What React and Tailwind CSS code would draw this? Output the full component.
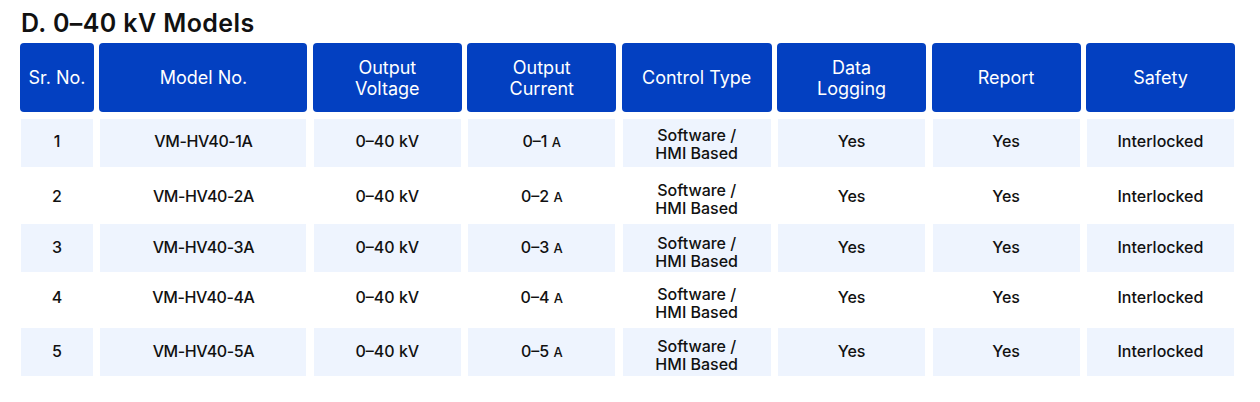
const columns = [
  { key: 'sr', label: ['Sr. No.'] },
  { key: 'model', label: ['Model No.'] },
  { key: 'voltage', label: ['Output', 'Voltage'] },
  { key: 'current', label: ['Output', 'Current'] },
  { key: 'control', label: ['Control Type'] },
  { key: 'logging', label: ['Data', 'Logging'] },
  { key: 'report', label: ['Report'] },
  { key: 'safety', label: ['Safety'] },
]

// small per-row nudges so the text sits where the original's font put it
const lineShift = ['-translate-y-[2px]', 'translate-y-[0.5px]', '-translate-y-[1.5px]', '-translate-y-[3px]', '-translate-y-[1.5px]']
const blockShift = ['translate-y-[0.5px]', 'translate-y-[4px]', 'translate-y-[3.5px]', 'translate-y-[3px]', 'translate-y-[3px]']

const rows = [1, 2, 3, 4, 5].map(n => ({
  sr: String(n),
  model: `VM-HV40-${n}A`,
  voltage: '0–40 kV',
  current: n,
  control: ['Software /', 'HMI Based'],
  logging: 'Yes',
  report: 'Yes',
  safety: 'Interlocked',
}))

const gridCols = 'grid grid-cols-[74px_208px_149px_149px_150px_149px_149px_149px] gap-x-[5.43px]'

function Cell({ col, value, row }) {
  let content = <span className={lineShift[row]}>{value}</span>
  if (col === 'model') {
    content = <span className={`tracking-[-0.4px] ${lineShift[row]}`}>{value}</span>
  }
  if (col === 'current') {
    content = (
      <span className={lineShift[row]}>
        0–{value}{' '}<span className="text-[13px]">A</span>
      </span>
    )
  }
  if (col === 'control') {
    content = (
      <span className={`leading-[18px] ${blockShift[row]}`}>
        {value[0]}
        <br />
        {value[1]}
      </span>
    )
  }
  return (
    <div
      className={`mx-px h-[48px] flex items-center justify-center text-center text-[16px] font-[450] text-[#111] ${
        row % 2 === 0 ? 'bg-[#eef4fe]' : ''
      }`}
    >
      {content}
    </div>
  )
}

export default function App() {
  return (
    <div
      className="w-[1260px] h-[402px] bg-white pl-[20px] pt-[7px]"
      style={{ fontFamily: 'Inter, "Noto Sans", sans-serif' }}
    >
      <h2 className="h-[32px] leading-[32px] text-[25px] font-semibold text-[#111] pl-px tracking-[0.4px]">
        D. 0–40 kV Models
      </h2>

      <div className="mt-[4px] w-[1215px]">
        {/* header */}
        <div className={gridCols}>
          {columns.map(c => (
            <div
              key={c.key}
              className="h-[69px] rounded-[4px] bg-[#0340c1] flex items-center justify-center text-center text-white text-[18px] leading-[21px]"
            >
              <span>
                {c.label.map((l, i) => (
                  <span key={i} className="block">
                    {l}
                  </span>
                ))}
              </span>
            </div>
          ))}
        </div>

        {/* body */}
        <div className="mt-[7px] flex flex-col gap-y-[4.25px]">
          {rows.map((r, i) => (
            <div key={r.sr} className={gridCols}>
              {columns.map(c => (
                <Cell key={c.key} col={c.key} value={r[c.key]} row={i} />
              ))}
            </div>
          ))}
        </div>
      </div>
    </div>
  )
}
